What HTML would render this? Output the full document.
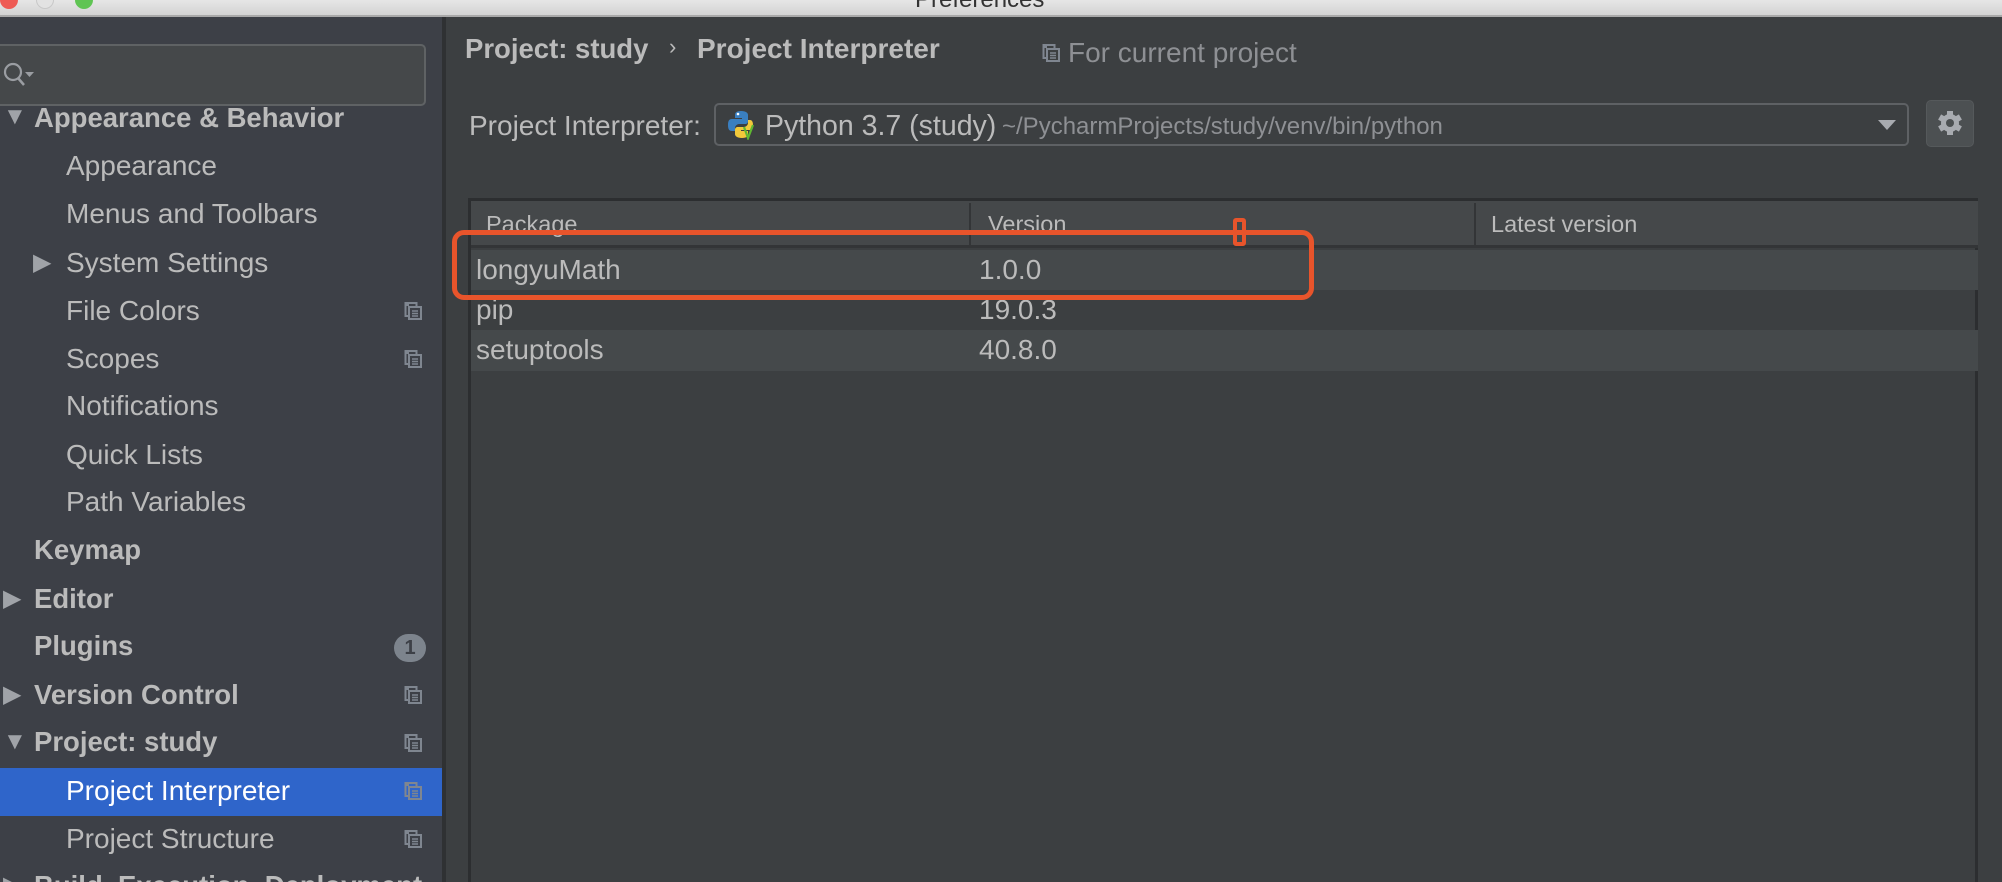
<!DOCTYPE html>
<html style="overflow:hidden;width:2002px;height:882px"><head><meta charset="utf-8"><style>
*{margin:0;padding:0;box-sizing:border-box}
body{width:2002px;height:882px;overflow:hidden;background:#3c3f41;font-family:"Liberation Sans",sans-serif;color:#bbbbbb;position:relative}
.a{position:absolute;white-space:nowrap}
#title{left:0;top:0;width:2002px;height:17px;background:linear-gradient(#e6e6e6,#d3d3d3);border-bottom:2px solid #a9a9a9}
#side{left:0;top:17px;width:442px;height:865px;background:#3d4047}
#sep{left:442px;top:17px;width:4px;height:865px;background:#2f3133}
.it{font-size:28px;line-height:48px;height:48px}
.b{font-weight:bold;font-size:27.5px}
.tri{font-size:24px;color:#a0a3a8}
.ic{width:18px;height:18px}
.row{left:471px;width:1507px;height:40px}
.tt{font-size:28px;line-height:40px}
</style></head><body>
<div class="a" id="title"></div>
<div class="a" style="left:0;top:-9px;width:18px;height:18px;border-radius:50%;background:#ee5b55"></div>
<div class="a" style="left:36px;top:-9px;width:18px;height:18px;border-radius:50%;background:#e2e2e2;border:1px solid #c8c8c8"></div>
<div class="a" style="left:75px;top:-9px;width:18px;height:18px;border-radius:50%;background:#5fc453"></div>
<div class="a" style="left:915px;top:-14px;font-size:24px;color:#333">Preferences</div>
<div class="a" id="side"></div>
<div class="a" id="sep"></div>
<div class="a" style="left:-6px;top:44px;width:432px;height:62px;background:#45484a;border:2px solid #5f6264;border-radius:5px"></div>
<svg class="a" style="left:2px;top:60px" width="36" height="30" viewBox="0 0 36 30"><circle cx="11" cy="12" r="8" fill="none" stroke="#9a9da2" stroke-width="2.2"/><line x1="16" y1="18" x2="22" y2="25" stroke="#9a9da2" stroke-width="2.5"/><path d="M23 12h9l-4.5 5z" fill="#9a9da2"/></svg>
<div class="a" style="left:0;top:768px;width:442px;height:48px;background:#2f65ca"></div>
<div class="a tri" style="left:3px;top:93px;line-height:48px">▼</div>
<div class="a it b" style="left:34px;top:94px">Appearance &amp; Behavior</div>
<div class="a it" style="left:66px;top:142px">Appearance</div>
<div class="a it" style="left:66px;top:190px">Menus and Toolbars</div>
<div class="a tri" style="left:33px;top:239px;line-height:48px">▶</div>
<div class="a it" style="left:66px;top:239px">System Settings</div>
<div class="a it" style="left:66px;top:287px">File Colors</div>
<div class="a it" style="left:66px;top:335px">Scopes</div>
<div class="a it" style="left:66px;top:382px">Notifications</div>
<div class="a it" style="left:66px;top:431px">Quick Lists</div>
<div class="a it" style="left:66px;top:478px">Path Variables</div>
<div class="a it b" style="left:34px;top:526px">Keymap</div>
<div class="a tri" style="left:3px;top:575px;line-height:48px">▶</div>
<div class="a it b" style="left:34px;top:575px">Editor</div>
<div class="a it b" style="left:34px;top:622px">Plugins</div>
<div class="a" style="left:394px;top:634px;width:32px;height:28px;border-radius:14px;background:#7d848d;color:#3d4047;font-size:20px;font-weight:bold;text-align:center;line-height:28px">1</div>
<div class="a tri" style="left:3px;top:671px;line-height:48px">▶</div>
<div class="a it b" style="left:34px;top:671px">Version Control</div>
<div class="a tri" style="left:3px;top:718px;line-height:48px">▼</div>
<div class="a it b" style="left:34px;top:718px">Project: study</div>
<div class="a it" style="left:66px;top:767px;color:#fff">Project Interpreter</div>
<div class="a it" style="left:66px;top:815px">Project Structure</div>
<div class="a tri" style="left:3px;top:862px;line-height:48px">▶</div>
<div class="a it b" style="left:34px;top:862px">Build, Execution, Deployment</div>
<svg width="0" height="0" style="position:absolute"><defs><g id="cp"><path d="M5 3H1.5v11H5" fill="none" stroke="#7f8690" stroke-width="2"/><rect x="5" y="5" width="12" height="12" fill="none" stroke="#7f8690" stroke-width="2"/><path d="M8 9h6M8 11.5h6M8 14h6" stroke="#7f8690" stroke-width="1.5"/><path d="M1.5 3V1h11v4" fill="none" stroke="#7f8690" stroke-width="2"/></g></defs></svg>
<svg class="a ic" style="left:404px;top:302px" viewBox="0 0 18 18"><use href="#cp"/></svg>
<svg class="a ic" style="left:404px;top:350px" viewBox="0 0 18 18"><use href="#cp"/></svg>
<svg class="a ic" style="left:404px;top:686px" viewBox="0 0 18 18"><use href="#cp"/></svg>
<svg class="a ic" style="left:404px;top:734px" viewBox="0 0 18 18"><use href="#cp"/></svg>
<svg class="a ic" style="left:404px;top:782px" viewBox="0 0 18 18"><use href="#cp"/></svg>
<svg class="a ic" style="left:404px;top:830px" viewBox="0 0 18 18"><use href="#cp"/></svg>
<div class="a" style="left:465px;top:33px;font-size:27.5px;font-weight:bold">Project: study</div>
<div class="a" style="left:669px;top:34px;font-size:22px">›</div>
<div class="a" style="left:697px;top:33px;font-size:28px;font-weight:bold">Project Interpreter</div>
<svg class="a" style="left:1042px;top:44px" width="18" height="18" viewBox="0 0 18 18"><use href="#cp"/></svg>
<div class="a" style="left:1068px;top:37px;font-size:28px;color:#8e9094">For current project</div>
<div class="a" style="left:469px;top:110px;font-size:28px">Project Interpreter:</div>
<div class="a" style="left:714px;top:103px;width:1195px;height:43px;border:2px solid #5e6164;border-radius:5px;background:#3c3f41"></div>
<svg class="a" style="left:728px;top:110px" width="30" height="30" viewBox="0 0 30 30"><path d="M13 1c-5 0-6 2-6 4v3h7v1H4c-3 0-4 2-4 6s1 6 4 6h3v-3c0-2 2-4 4-4h6c2 0 3-1 3-3V5c0-2-2-4-7-4z" fill="#3a7fc0"/><circle cx="10" cy="4" r="1.3" fill="#fff"/><path d="M14 28c5 0 6-2 6-4v-3h-7v-1h9c3 0 3-2 3-5s-1-5-3-5h-2v3c0 2-2 4-4 4H10c-2 0-3 1-3 3v4c0 2 2 4 7 4z" fill="#f2c93b"/><path d="M16 17l4 11 5-13" fill="none" stroke="#5fb832" stroke-width="2.2"/></svg>
<div class="a" style="left:765px;top:110px;font-size:28.5px">Python 3.7 (study)</div>
<div class="a" style="left:1002px;top:113px;font-size:24px;color:#8e9094">~/PycharmProjects/study/venv/bin/python</div>
<div class="a" style="left:1878px;top:120px;width:0;height:0;border-left:9px solid transparent;border-right:9px solid transparent;border-top:10px solid #a8abb0"></div>
<div class="a" style="left:1926px;top:100px;width:48px;height:47px;border-radius:5px;background:#4c5052;border:1px solid #55595b"></div>
<svg class="a" style="left:1936px;top:109px" width="28" height="28" viewBox="0 0 28 28"><g fill="#a8abb0"><circle cx="14" cy="14" r="9"/><rect x="11" y="2" width="6" height="24"/><rect x="11" y="2" width="6" height="24" transform="rotate(60 14 14)"/><rect x="11" y="2" width="6" height="24" transform="rotate(120 14 14)"/></g><circle cx="14" cy="14" r="4" fill="#4c5052"/></svg>
<div class="a" style="left:468px;top:198px;width:1510px;height:684px;border:3px solid #2c2e30;border-bottom:none;background:#3c3f41"></div>
<div class="a" style="left:471px;top:201px;width:1507px;height:47px;background:#45484a;border-bottom:3px solid #333537"></div>
<div class="a" style="left:969px;top:203px;width:2px;height:42px;background:#333537"></div>
<div class="a" style="left:1474px;top:203px;width:2px;height:42px;background:#333537"></div>
<div class="a" style="left:486px;top:211px;font-size:23.5px">Package</div>
<div class="a" style="left:988px;top:211px;font-size:23.5px">Version</div>
<div class="a" style="left:1491px;top:211px;font-size:23.5px">Latest version</div>
<div class="a row" style="top:250px;background:#45494b"></div>
<div class="a row" style="top:330px;height:41px;background:#45494b"></div>
<div class="a tt" style="left:476px;top:250px">longyuMath</div>
<div class="a tt" style="left:979px;top:250px">1.0.0</div>
<div class="a tt" style="left:476px;top:290px">pip</div>
<div class="a tt" style="left:979px;top:290px">19.0.3</div>
<div class="a tt" style="left:476px;top:330px">setuptools</div>
<div class="a tt" style="left:979px;top:330px">40.8.0</div>
<div class="a" style="left:452px;top:230px;width:862px;height:70px;border:5px solid #e8542b;border-radius:12px"></div>
<div class="a" style="left:1233px;top:218px;width:13px;height:28px;border:4px solid #e8542b;border-radius:3px"></div>
</body></html>
